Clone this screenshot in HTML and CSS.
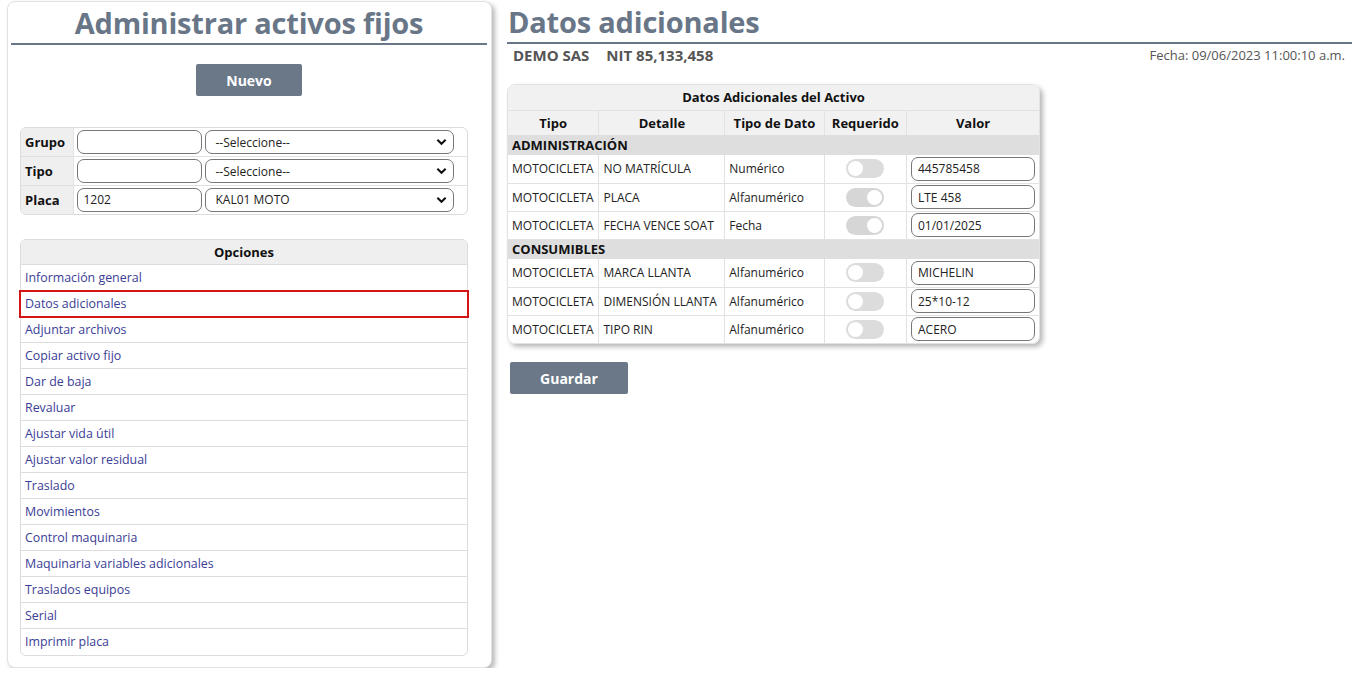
FILE: index.html
```html
<!DOCTYPE html>
<html lang="es">
<head>
<meta charset="utf-8">
<link rel="stylesheet" href="styles.css">
</head>
<body>
<div class="page">
  <aside class="side-card">
    <h1 class="title center">Administrar activos fijos</h1>
    <div class="btn-row"><button class="btn btn-nuevo">Nuevo</button></div>
    <div class="filter-box">
      <table class="filter">
        <tr>
          <th>Grupo</th>
          <td class="in-cell"><input class="txt" type="text" value=""></td>
          <td><div class="sel">--Seleccione--<svg viewBox="0 0 12 8" class="chev"><path d="M1.5 1.5 L6 6 L10.5 1.5" /></svg></div></td>
        </tr>
        <tr>
          <th>Tipo</th>
          <td class="in-cell"><input class="txt" type="text" value=""></td>
          <td><div class="sel">--Seleccione--<svg viewBox="0 0 12 8" class="chev"><path d="M1.5 1.5 L6 6 L10.5 1.5" /></svg></div></td>
        </tr>
        <tr>
          <th>Placa</th>
          <td class="in-cell"><input class="txt" type="text" value="1202"></td>
          <td><div class="sel">KAL01 MOTO<svg viewBox="0 0 12 8" class="chev"><path d="M1.5 1.5 L6 6 L10.5 1.5" /></svg></div></td>
        </tr>
      </table>
    </div>
    <div class="options">
      <div class="options-head">Opciones</div>
      <a class="opt">Información general</a>
      <a class="opt active">Datos adicionales</a>
      <a class="opt">Adjuntar archivos</a>
      <a class="opt">Copiar activo fijo</a>
      <a class="opt">Dar de baja</a>
      <a class="opt">Revaluar</a>
      <a class="opt">Ajustar vida útil</a>
      <a class="opt">Ajustar valor residual</a>
      <a class="opt">Traslado</a>
      <a class="opt">Movimientos</a>
      <a class="opt">Control maquinaria</a>
      <a class="opt">Maquinaria variables adicionales</a>
      <a class="opt">Traslados equipos</a>
      <a class="opt">Serial</a>
      <a class="opt last">Imprimir placa</a>
    </div>
  </aside>

  <main class="main">
    <h1 class="title">Datos adicionales</h1>
    <div class="company">
      <span class="co-name"><span>DEMO SAS</span><span>NIT 85,133,458</span></span>
      <span class="fecha">Fecha: 09/06/2023 11:00:10 a.m.</span>
    </div>
    <div class="data-card">
      <table class="data">
        <tr class="cap"><th colspan="5">Datos Adicionales del Activo</th></tr>
        <tr class="heads">
          <th class="c1">Tipo</th><th class="c2">Detalle</th><th class="c3">Tipo de Dato</th><th class="c4">Requerido</th><th class="c5">Valor</th>
        </tr>
        <tr class="group"><td colspan="5">ADMINISTRACIÓN</td></tr>
        <tr class="row">
          <td>MOTOCICLETA</td><td>NO MATRÍCULA</td><td>Numérico</td>
          <td class="tg-cell"><span class="toggle"></span></td>
          <td><input class="val" type="text" value="445785458"></td>
        </tr>
        <tr class="row">
          <td>MOTOCICLETA</td><td>PLACA</td><td>Alfanumérico</td>
          <td class="tg-cell"><span class="toggle on"></span></td>
          <td><input class="val" type="text" value="LTE 458"></td>
        </tr>
        <tr class="row">
          <td>MOTOCICLETA</td><td>FECHA VENCE SOAT</td><td>Fecha</td>
          <td class="tg-cell"><span class="toggle on"></span></td>
          <td><input class="val" type="text" value="01/01/2025"></td>
        </tr>
        <tr class="group"><td colspan="5">CONSUMIBLES</td></tr>
        <tr class="row">
          <td>MOTOCICLETA</td><td>MARCA LLANTA</td><td>Alfanumérico</td>
          <td class="tg-cell"><span class="toggle"></span></td>
          <td><input class="val" type="text" value="MICHELIN"></td>
        </tr>
        <tr class="row">
          <td>MOTOCICLETA</td><td>DIMENSIÓN LLANTA</td><td>Alfanumérico</td>
          <td class="tg-cell"><span class="toggle"></span></td>
          <td><input class="val" type="text" value="25*10-12"></td>
        </tr>
        <tr class="row">
          <td>MOTOCICLETA</td><td>TIPO RIN</td><td>Alfanumérico</td>
          <td class="tg-cell"><span class="toggle"></span></td>
          <td><input class="val" type="text" value="ACERO"></td>
        </tr>
      </table>
    </div>
    <button class="btn btn-guardar">Guardar</button>
  </main>
</div>
</body>
</html>
```
FILE: styles.css
```css
* { box-sizing: border-box; }
html, body { margin: 0; padding: 0; background: #fff; }
body {
  font-family: "Open Sans", "Noto Sans", sans-serif;
  font-size: 12px;
  color: #222;
}
.page {
  display: flex;
  align-items: flex-start;
  gap: 15px;
  padding: 1px 7px 0 7px;
}
.side-card {
  width: 485px;
  flex: none;
  border: 1px solid #e2e2e2;
  border-radius: 8px;
  box-shadow: 3px 3px 5px rgba(0,0,0,0.28);
  padding: 0 4px 11px 3px;
  background: #fff;
}
.title {
  margin: 0;
  font-size: 29px;
  font-weight: 700;
  color: #687687;
  line-height: 41px;
  border-bottom: 2px solid #687687;
  letter-spacing: -0.2px;
}
.title.center { text-align: center; }
.btn-row { display: flex; justify-content: center; margin-top: 19px; }
.btn {
  font-family: "Open Sans", sans-serif;
  background: #6a7888;
  color: #fff;
  border: none;
  border-radius: 2px;
  font-weight: 700;
  font-size: 14px;
  height: 32px;
  cursor: pointer;
}
.btn-nuevo { width: 106px; }
.filter-box {
  margin: 31px 19px 0 9px;
  border: 1px solid #dcdcdc;
  border-radius: 6px;
  overflow: hidden;
}
.filter { border-collapse: collapse; width: 100%; }
.filter tr + tr th, .filter tr + tr td { border-top: 1px solid #e0e0e0; }
.filter th {
  width: 52px;
  background: #efefef;
  text-align: left;
  padding: 0 4px;
  font-size: 13px;
  font-weight: 700;
  color: #111;
  height: 28.7px;
  border-right: 1px solid #e4e4e4;
}
.filter td { padding: 1px 0 1px 3px; }
.filter td.in-cell { width: 128px; }
.filter td:last-child { padding-right: 13px; }
.txt {
  display: block;
  width: 125px;
  height: 24px;
  border: 1px solid #777;
  border-radius: 7px;
  font-family: "Open Sans", sans-serif;
  font-size: 12px;
  padding: 0 6px;
  color: #222;
}
.sel {
  display: flex;
  align-items: center;
  justify-content: space-between;
  height: 24px;
  border: 1px solid #777;
  border-radius: 7px;
  padding: 0 6px 0 10px;
  font-size: 12px;
  color: #222;
}
.chev { width: 11px; height: 8px; fill: none; stroke: #111; stroke-width: 2.2; }
.options {
  margin: 24px 19px 0 9px;
  border: 1px solid #dcdcdc;
  border-radius: 6px;
  display: flex;
  flex-direction: column;
}
.options-head {
  height: 25px;
  background: #efefef;
  text-align: center;
  font-weight: 700;
  font-size: 13px;
  color: #111;
  line-height: 25px;
  border-bottom: 1px solid #dcdcdc;
  border-radius: 6px 6px 0 0;
}
.opt {
  display: block;
  height: 26px;
  line-height: 25px;
  padding: 0 4px;
  color: #3a3d96;
  font-size: 12.4px;
  border-bottom: 1px solid #dcdcdc;
  text-decoration: none;
}
.opt.last { border-bottom: none; }
.opt.active {
  outline: 2px solid #d41313;
  outline-offset: -1px;
  position: relative;
  margin: 0 -1px;
  padding: 0 5px;
}
.main { flex: 1; display: flex; flex-direction: column; align-items: flex-start; }
.main .title { width: 100%; padding-left: 1px; }
.company {
  width: 100%;
  display: flex;
  justify-content: space-between;
  align-items: center;
  padding: 1px 7px 0 6px;
  height: 20px;
}
.co-name { font-size: 15px; font-weight: 700; color: #555; display: flex; gap: 17px; }
.fecha { font-size: 13px; color: #555; }
.data-card {
  margin-top: 20px;
  width: 533px;
  border: 1px solid #e2e2e2;
  border-radius: 8px;
  box-shadow: 3px 3px 5px rgba(0,0,0,0.28);
  overflow: hidden;
}
.data { border-collapse: collapse; width: 100%; }
.data th { font-size: 13px; font-weight: 700; color: #111; background: #f1f1f1; }
.cap th { height: 25px; border-bottom: 1px solid #e2e2e2; }
.heads th { height: 25px; border-right: 1px solid #e2e2e2; }
.heads th:last-child { border-right: none; }
.c1 { width: 91px; } .c2 { width: 126px; } .c3 { width: 100px; } .c4 { width: 83px; }
.group td {
  background: #dedede;
  font-weight: 700;
  font-size: 13px;
  color: #111;
  height: 20px;
  padding: 0 4px;
}
.row td {
  height: 28px;
  padding: 0 4px;
  font-size: 12px;
  color: #222;
  border-right: 1px solid #e2e2e2;
  border-bottom: 1px solid #e2e2e2;
  white-space: nowrap;
}
.row td:last-child { border-right: none; }
.row:last-child td { border-bottom: none; }
.tg-cell { text-align: center; }
.toggle {
  display: inline-block;
  vertical-align: middle;
  width: 38px;
  height: 19px;
  border-radius: 10px;
  background: #dcdcdc;
  position: relative;
}
.toggle::after {
  content: "";
  position: absolute;
  top: 2px;
  left: 2px;
  width: 15px;
  height: 15px;
  border-radius: 50%;
  background: #fff;
}
.toggle.on { background: #d6d6d6; }
.toggle.on::after { left: 21px; }
.val {
  display: block;
  width: 124px;
  height: 24px;
  border: 1px solid #777;
  border-radius: 7px;
  padding: 0 6px;
  font-family: "Open Sans", sans-serif;
  font-size: 12px;
  color: #222;
}
.btn-guardar { margin-top: 18px; margin-left: 3px; width: 118px; }
```
